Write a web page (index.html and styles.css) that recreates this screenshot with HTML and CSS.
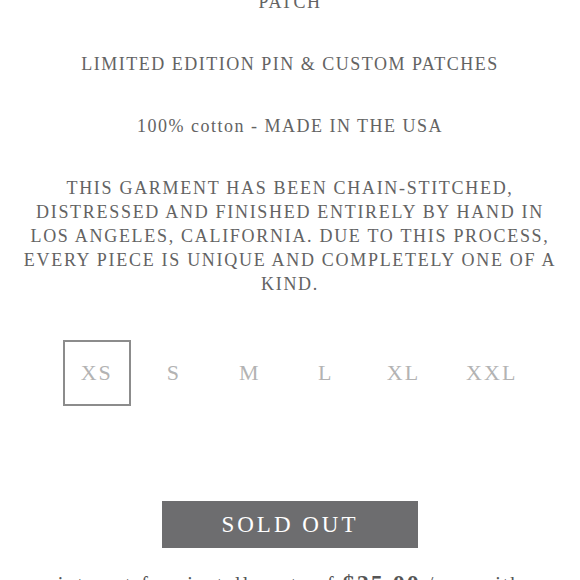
FILE: index.html
```html
<!DOCTYPE html>
<html>
    <head>
        <meta charset='utf-8'>
        <title>Product details</title>
        <link rel="stylesheet" href="styles.css">
    </head>
    <body>
        <div class="details">
            <p>PATCH</p>
            <p>LIMITED EDITION PIN &amp; CUSTOM PATCHES</p>
            <p>100% cotton - MADE IN THE USA</p>
            <p class="about">THIS GARMENT HAS BEEN CHAIN-STITCHED, DISTRESSED AND FINISHED ENTIRELY BY HAND IN LOS ANGELES, CALIFORNIA. DUE TO THIS PROCESS, EVERY PIECE IS UNIQUE AND COMPLETELY ONE OF A KIND.</p>
        </div>
        <div class="sizes">
            <span class="size selected">XS</span>
            <span class="size">S</span>
            <span class="size">M</span>
            <span class="size">L</span>
            <span class="size">XL</span>
            <span class="size">XXL</span>
        </div>
        <div class="buy">
            <button class="soldout">SOLD OUT</button>
        </div>
        <p class="installments">interest-free installments of <b>$25.00</b> / mo with</p>
    </body>
</html>
```

FILE: styles.css
```css
body {
    margin: 0;
    font-family: "Liberation Serif", serif;
    color: #636363;
    background: #fff;
    overflow: hidden;
}
.details {
    margin-top: -10px;
    padding: 0 20px;
    text-align: center;
}
.details p {
    margin: 0 0 38px 0;
    font-size: 18px;
    line-height: 24px;
    letter-spacing: 1.5px;
}
.details .about {
    margin-bottom: 44px;
    letter-spacing: 1.7px;
}
.sizes {
    display: flex;
    justify-content: center;
    gap: 10px;
    padding-left: 18px;
}
.size {
    box-sizing: border-box;
    min-width: 66px;
    height: 66px;
    padding: 0 16px;
    display: flex;
    align-items: center;
    justify-content: center;
    font-size: 22px;
    letter-spacing: 2px;
    color: #b3b3b3;
    border: 2px solid transparent;
}
.size.selected {
    border-color: #8c8c8c;
}
.buy {
    margin-top: 95px;
    text-align: center;
}
.soldout {
    width: 256px;
    height: 47px;
    border: 0;
    background: #6d6d6f;
    color: #fff;
    font-family: "Liberation Serif", serif;
    font-size: 23px;
    letter-spacing: 3px;
}
.installments {
    margin: 22px 0 0 0;
    text-align: center;
    font-size: 20px;
    letter-spacing: 2px;
    color: #555;
}
.installments b {
    font-size: 24px;
}
```
